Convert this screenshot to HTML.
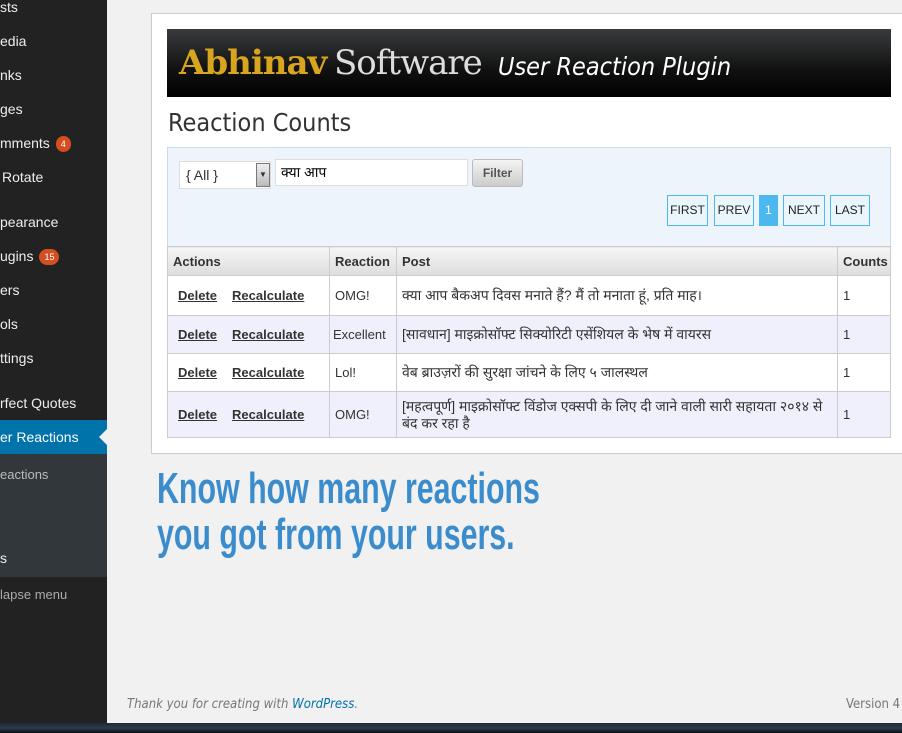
<!DOCTYPE html>
<html><head><meta charset="utf-8"><style>
*{margin:0;padding:0;box-sizing:border-box}
body{width:902px;height:733px;overflow:hidden;background:#f1f1f1;font-family:"Liberation Sans",sans-serif;position:relative}
#side{position:absolute;left:0;top:0;width:107px;height:723px;background:#222}
#side .it{position:absolute;left:0;color:#eee;font-size:14px;white-space:nowrap;line-height:18px}
.badge{display:inline-block;background:#d54e21;color:#fff;font-size:9px;border-radius:9px;padding:0 5px;line-height:16px;margin-left:6px;vertical-align:1px}
#sub{position:absolute;left:0;top:454px;width:107px;height:123px;background:#32373c}
#hl{position:absolute;left:0;top:420px;width:107px;height:34px;background:#0073aa}
#bottom{position:absolute;left:0;top:723px;width:902px;height:10px;background:linear-gradient(#1e2a36,#2d3a48,#0b0f14)}
#panel{position:absolute;left:151px;top:13px;width:760px;height:441px;background:#fff;border:1px solid #ccc}
#banner{position:absolute;left:167px;top:29px;width:724px;height:68px;background:linear-gradient(#3a3b3e,#111 60%,#000)}
h2{position:absolute;left:168px;top:108px;font-size:25px;font-weight:normal;color:#333;font-family:"DejaVu Sans Condensed","Liberation Sans",sans-serif}
#filt{position:absolute;left:167px;top:147px;width:724px;height:100px;background:#eef4fc;border:1px solid #c9d9ee}
table{position:absolute;left:167px;top:246px;width:723px;table-layout:fixed;border-collapse:collapse;font-family:"Liberation Sans","Noto Sans CJK SC",sans-serif;font-size:13px;color:#333}
td,th{border:1px solid #ccc;padding:0 5px;text-align:left;vertical-align:middle;white-space:normal;overflow:hidden}
td.p{font-size:14px}
th{background:linear-gradient(#f6f6f6,#ddd);height:29px;font-weight:bold}
td a{color:#333;font-weight:bold;text-decoration:underline;margin-left:5px;margin-right:10px}
tr.alt td{background:#f0f0fc}
.pg{position:absolute;top:195px;height:31px;border:1px solid #4bb8f0;background:#eaf6fc;font-size:12px;color:#222;line-height:29px;text-align:center}
</style></head><body>
<div id="side">
<div id="sub"></div><div id="hl"></div>
<div class="it" style="top:-2px">sts</div>
<div class="it" style="top:32px">edia</div>
<div class="it" style="top:66px">nks</div>
<div class="it" style="top:100px">ges</div>
<div class="it" style="top:134px">mments<span class="badge">4</span></div>
<div class="it" style="top:168px;left:2px">Rotate</div>
<div class="it" style="top:213px">pearance</div>
<div class="it" style="top:247px">ugins<span class="badge">15</span></div>
<div class="it" style="top:281px">ers</div>
<div class="it" style="top:315px">ols</div>
<div class="it" style="top:349px">ttings</div>
<div class="it" style="top:394px">rfect Quotes</div>
<div class="it" style="top:428px;color:#fff">er Reactions</div>
<div style="position:absolute;left:99px;top:429px;width:0;height:0;border-top:8px solid transparent;border-bottom:8px solid transparent;border-right:8px solid #f1f1f1"></div>
<div class="it" style="top:466px;font-size:13px;color:#bbb">eactions</div>
<div class="it" style="top:549px">s</div>
<div class="it" style="top:586px;font-size:13px;color:#aaa">lapse menu</div>
</div>
<div id="panel"></div>
<div id="banner">
<span style="position:absolute;left:12px;top:14px;font-family:'DejaVu Serif',serif;font-size:34px;font-weight:bold;color:#d9a41e;letter-spacing:-1px">Abhinav</span>
<span style="position:absolute;left:167px;top:14px;font-family:'DejaVu Serif',serif;font-size:34px;color:#ddd;letter-spacing:-1px">Software</span>
<span style="position:absolute;left:331px;top:23px;font-family:'DejaVu Sans Condensed',sans-serif;font-style:italic;font-size:25px;color:#fff">User Reaction Plugin</span>
</div>
<h2>Reaction Counts</h2>
<div id="filt">
<div style="position:absolute;left:11px;top:13px;width:92px;height:28px;background:#fff;border:1px solid #ddd;font-size:14px;color:#333;line-height:26px;padding-left:6px">{ All }<div style="position:absolute;right:0;top:1px;width:14px;height:24px;background:linear-gradient(#eee,#bbb);border:1px solid #777;font-size:8px;line-height:22px;text-align:center">▼</div></div>
<div style="position:absolute;left:107px;top:11px;width:193px;height:27px;background:#fff;border:1px solid #ddd;font-size:14px;line-height:25px;padding-left:5px;font-family:'Liberation Sans','Noto Sans CJK SC',sans-serif">क्या आप</div>
<div style="position:absolute;left:304px;top:11px;width:51px;height:28px;background:linear-gradient(#f4f4f4,#ccc);border:1px solid #bbb;border-radius:3px;font-weight:bold;color:#555;font-size:12px;line-height:26px;text-align:center">Filter</div>
</div>
<div class="pg" style="left:667px;width:41px">FIRST</div>
<div class="pg" style="left:714px;width:40px">PREV</div>
<div class="pg" style="left:759px;width:19px;background:#4bb8f0;color:#fff;border-color:#4bb8f0">1</div>
<div class="pg" style="left:783px;width:42px">NEXT</div>
<div class="pg" style="left:830px;width:40px">LAST</div>
<table>
<colgroup><col style="width:162px"><col style="width:67px"><col style="width:441px"><col style="width:53px"></colgroup>
<tr><th>Actions</th><th>Reaction</th><th>Post</th><th>Counts</th></tr>
<tr style="height:40px"><td><a>Delete</a><a>Recalculate</a></td><td>OMG!</td><td class="p">क्या आप बैकअप दिवस मनाते हैं? मैं तो मनाता हूं, प्रति माह।</td><td>1</td></tr>
<tr class="alt" style="height:38px"><td><a>Delete</a><a>Recalculate</a></td><td style="padding:0 3px">Excellent</td><td class="p">[सावधान] माइक्रोसॉफ्ट सिक्योरिटी एसेंशियल के भेष में वायरस</td><td>1</td></tr>
<tr style="height:38px"><td><a>Delete</a><a>Recalculate</a></td><td>Lol!</td><td class="p">वेब ब्राउज़रों की सुरक्षा जांचने के लिए ५ जालस्थल</td><td>1</td></tr>
<tr class="alt" style="height:46px"><td><a>Delete</a><a>Recalculate</a></td><td>OMG!</td><td class="p" style="line-height:17px">[महत्वपूर्ण] माइक्रोसॉफ्ट विंडोज एक्सपी के लिए दी जाने वाली सारी सहायता २०१४ से<br>बंद कर रहा है</td><td>1</td></tr>
</table>
<div style="position:absolute;left:157px;top:466px;color:#3a8ccc;font-weight:bold;font-size:44px;line-height:46px;white-space:nowrap;transform-origin:0 0;transform:scaleX(0.69)">Know how many reactions<br>you got from your users.</div>
<div style="position:absolute;left:127px;top:697px;font-size:13px;font-style:italic;color:#777;font-family:'DejaVu Sans Condensed',sans-serif">Thank you for creating with <span style="color:#0073aa">WordPress</span>.</div>
<div style="position:absolute;left:846px;top:697px;font-size:13px;color:#777;font-family:'DejaVu Sans Condensed',sans-serif">Version 4</div>
<div id="bottom"></div>
</body></html>
